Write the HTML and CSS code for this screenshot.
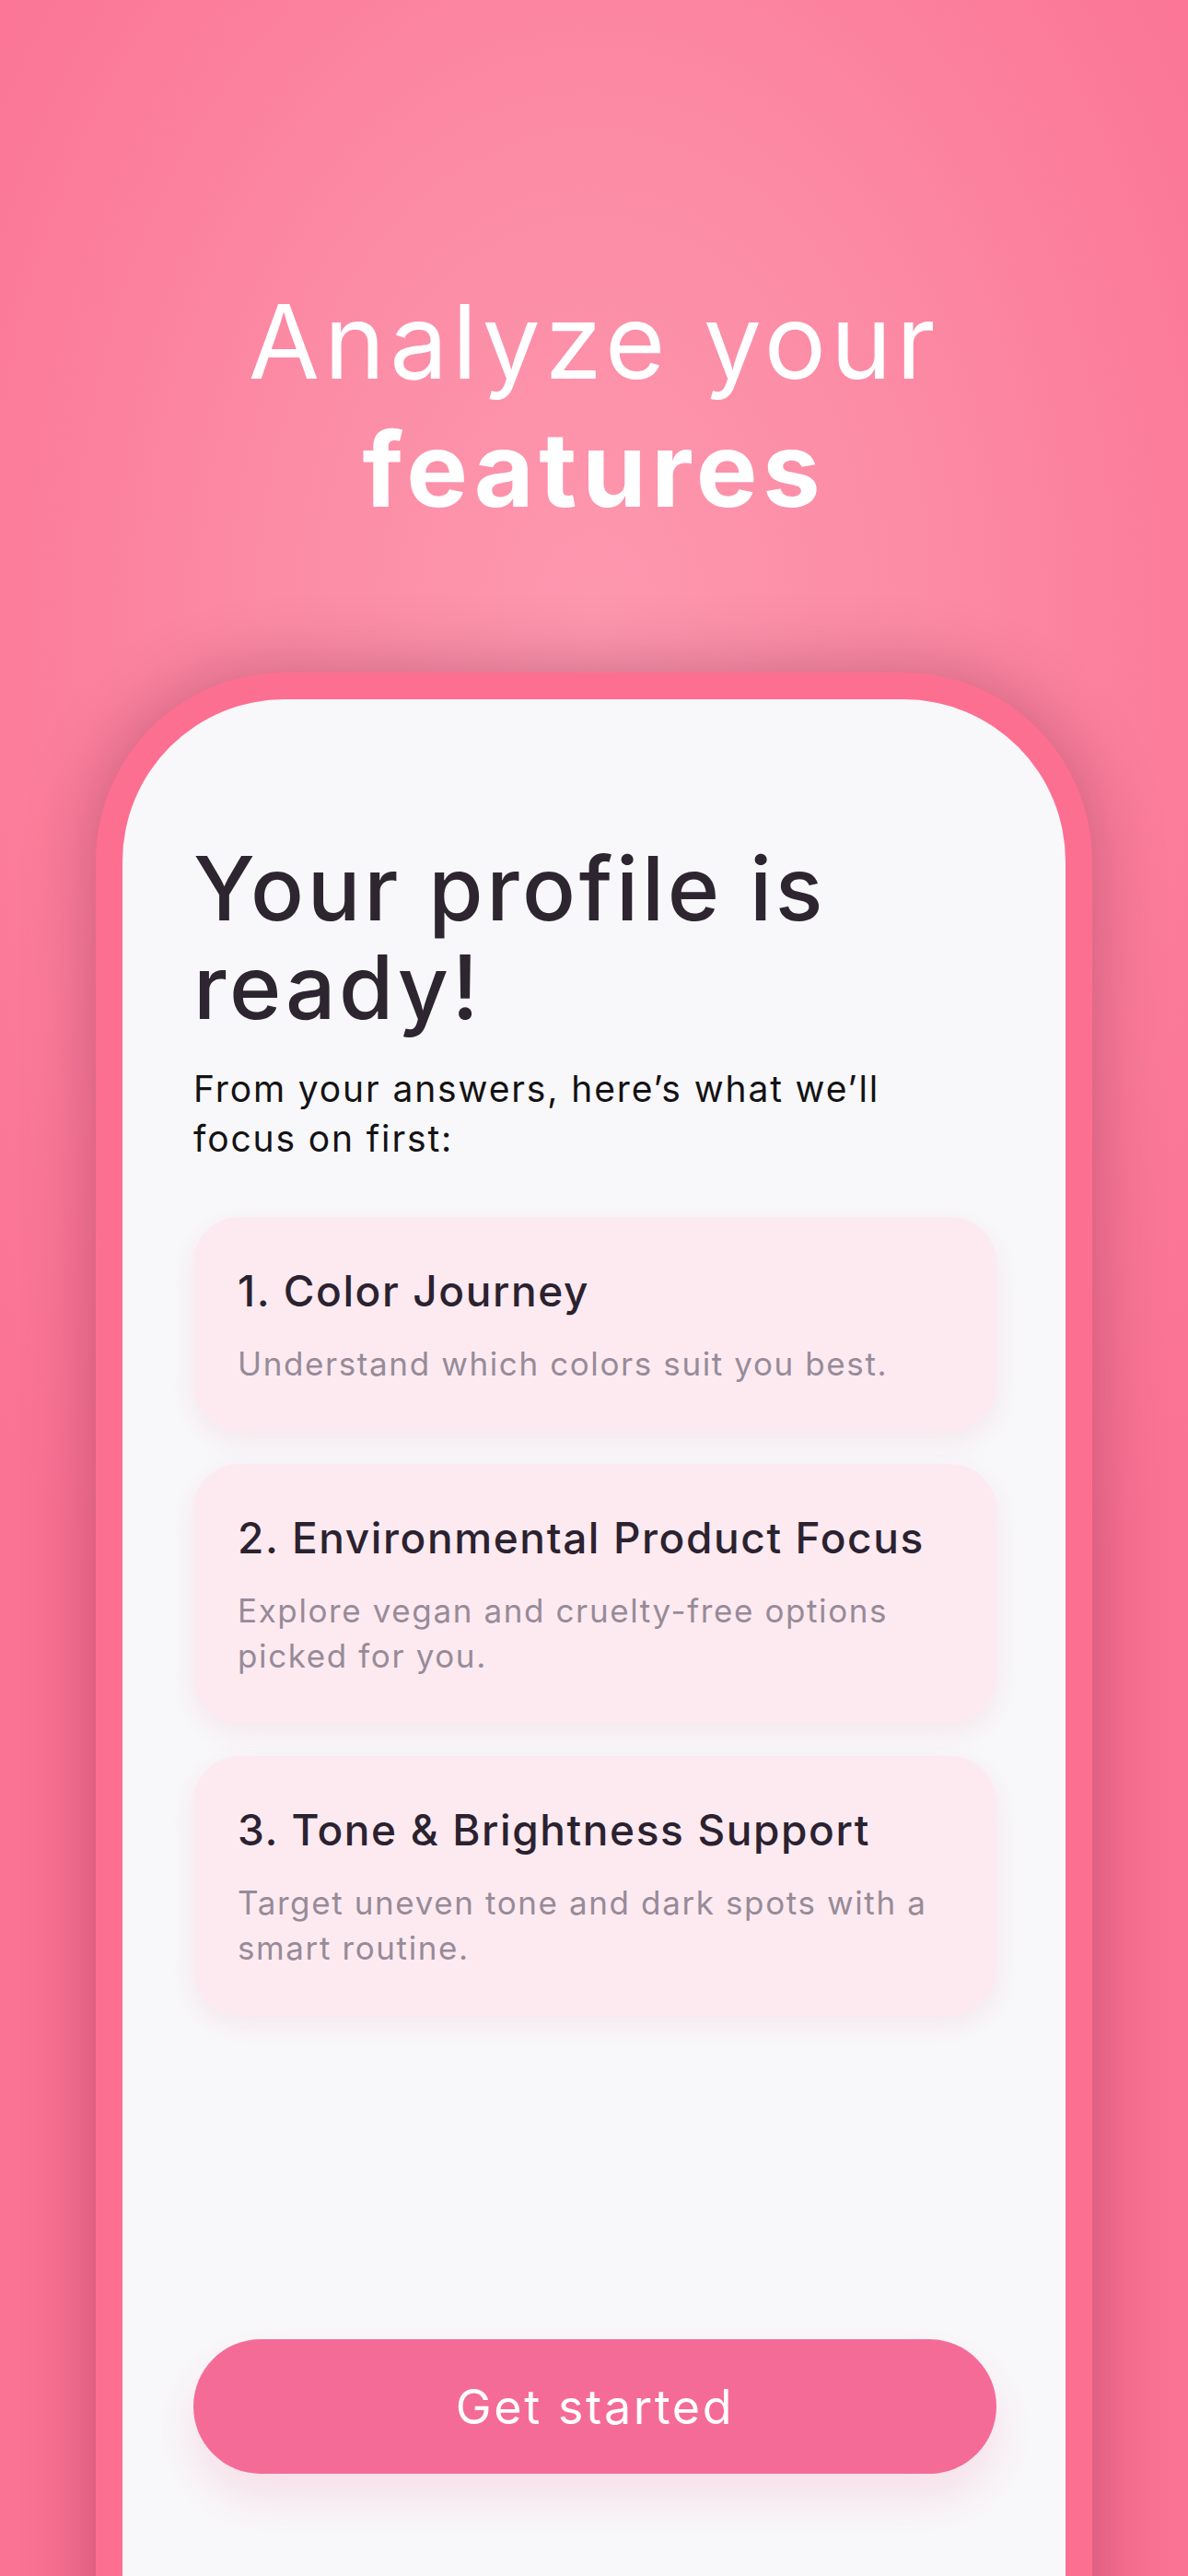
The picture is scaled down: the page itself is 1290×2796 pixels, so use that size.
FILE: index.html
```html
<!DOCTYPE html>
<html lang="en">
<head>
<meta charset="utf-8">
<title>Analyze your features</title>
<link rel="stylesheet" href="styles.css">
</head>
<body>
<main class="screen">
  <h1 class="hero">Analyze your <strong>features</strong></h1>
  <section class="phone">
    <div class="phone-inner">
      <h2 class="heading">Your profile is ready!</h2>
      <p class="subtitle">From your answers, here’s what we’ll focus on first:</p>
      <ul class="focus-list">
        <li class="focus-card">
          <h3 class="focus-title">1. Color Journey</h3>
          <p class="focus-desc">Understand which colors suit you best.</p>
        </li>
        <li class="focus-card">
          <h3 class="focus-title">2. Environmental Product Focus</h3>
          <p class="focus-desc">Explore vegan and cruelty-free options picked for you.</p>
        </li>
        <li class="focus-card">
          <h3 class="focus-title">3. Tone &amp; Brightness Support</h3>
          <p class="focus-desc">Target uneven tone and dark spots with a smart routine.</p>
        </li>
      </ul>
      <button class="cta" type="button">Get started</button>
    </div>
  </section>
</main>
</body>
</html>
```
FILE: styles.css
```css
* {
  box-sizing: border-box;
}

html, body {
  margin: 0;
  padding: 0;
}

body {
  width: 1290px;
  height: 2796px;
  overflow: hidden;
  font-family: Inter, "Open Sans", "DejaVu Sans", sans-serif;
  background-color: #fa7294;
  background-image: radial-gradient(ellipse 900px 1300px at 50% 24%, #fd98af 0%, #fc8ba5 40%, #fb7898 80%, #fa7294 100%);
}

.screen {
  width: 1290px;
  height: 2796px;
  overflow: hidden;
  display: flex;
  flex-direction: column;
  align-items: center;
}

.hero {
  margin: 0;
  padding-top: 301px;
  width: 1000px;
  text-align: center;
  color: #ffffff;
  font-size: 112px;
  line-height: 139px;
  font-weight: 400;
  letter-spacing: 0.045em;
}

.hero strong {
  display: block;
  font-weight: 700;
  letter-spacing: 0.05em;
}

.phone {
  margin-top: 151px;
  width: 1082px;
  height: 2200px;
  flex-shrink: 0;
  border: 29px solid #fd6f91;
  border-bottom: 0;
  border-radius: 205px 205px 0 0;
  background: #fd6f91;
  box-shadow: 0 0 80px rgba(90, 10, 40, 0.32);
}

.phone-inner {
  height: 100%;
  background: #f8f8fa;
  border-radius: 176px 176px 0 0;
  padding: 152px 75px 0 77px;
  display: flex;
  flex-direction: column;
}

.heading {
  margin: 0;
  color: #2d2530;
  font-size: 96px;
  line-height: 107px;
  font-weight: 500;
  letter-spacing: 0.038em;
}

.subtitle {
  margin: 30px 0 0;
  max-width: 800px;
  color: #141214;
  font-size: 39px;
  line-height: 54px;
  font-weight: 400;
  letter-spacing: 0.048em;
}

.focus-list {
  list-style: none;
  margin: 58px 0 0;
  padding: 0;
  display: flex;
  flex-direction: column;
  gap: 36px;
}

.focus-card {
  background: #fdeaf0;
  border-radius: 50px;
  padding: 51px 30px 48px 48px;
  box-shadow: 0 10px 30px rgba(236, 170, 192, 0.22);
}

.focus-title {
  margin: 0;
  color: #2b2230;
  font-size: 46px;
  line-height: 58px;
  font-weight: 500;
  letter-spacing: 0.035em;
}

.focus-desc {
  margin: 26px 0 0;
  color: #978b99;
  font-size: 35px;
  line-height: 49px;
  font-weight: 400;
  letter-spacing: 0.046em;
}

.cta {
  margin-top: 352px;
  height: 146px;
  width: 100%;
  border: 0;
  border-radius: 73px;
  background: #f56b98;
  color: #ffffff;
  font-family: inherit;
  font-size: 52px;
  font-weight: 400;
  letter-spacing: 0.05em;
  box-shadow: 0 26px 50px rgba(240, 120, 160, 0.2);
}
```
